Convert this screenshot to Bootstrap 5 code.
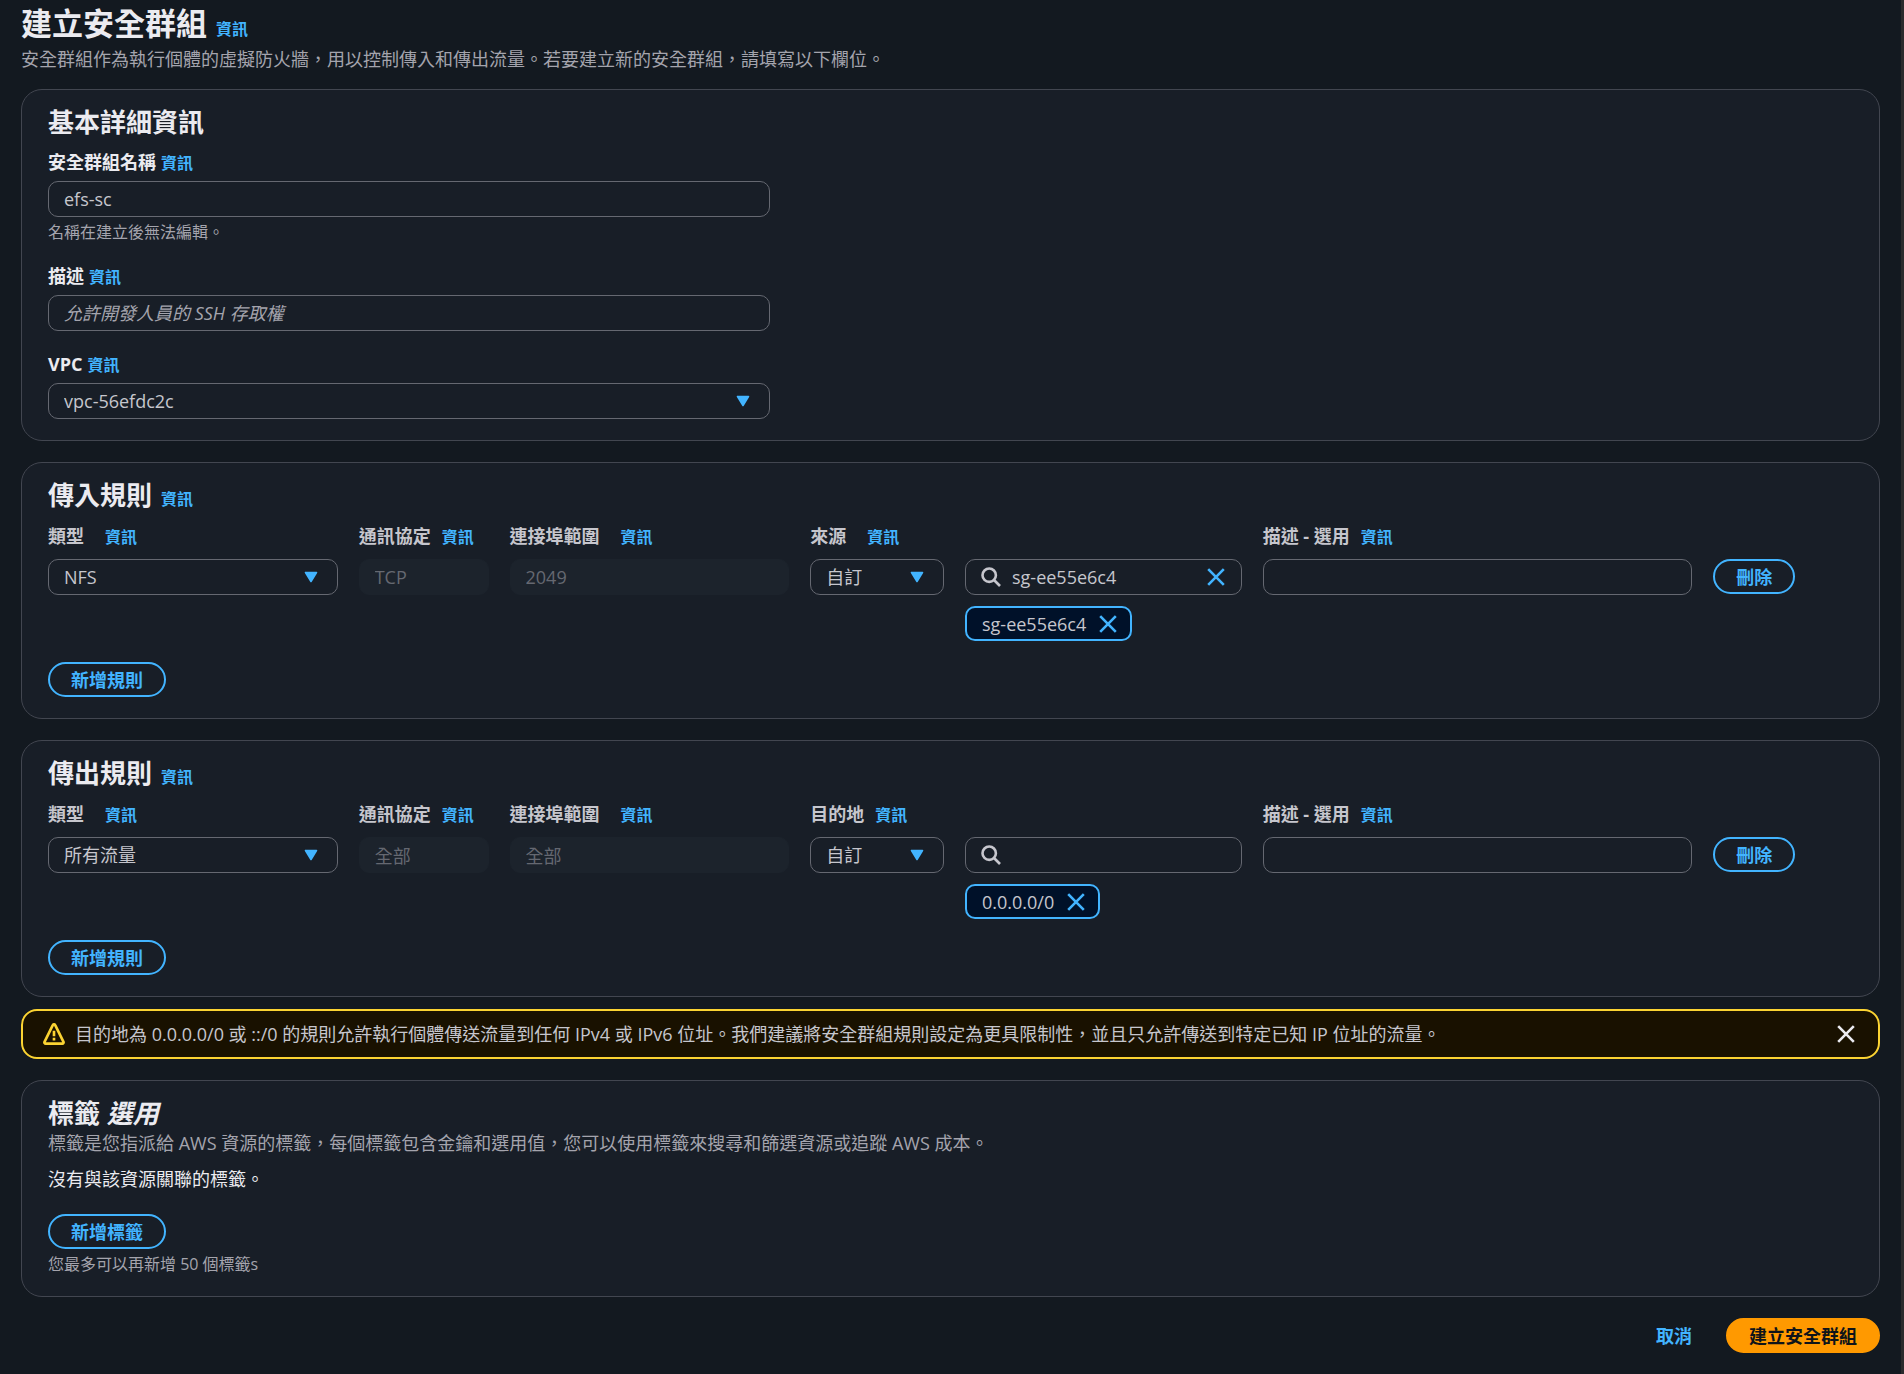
<!DOCTYPE html>
<html lang="zh-Hant" data-bs-theme="dark">
<head>
<meta charset="utf-8">
<meta name="viewport" content="width=device-width, initial-scale=1">
<title>建立安全群組</title>
<link href="https://cdn.jsdelivr.net/npm/bootstrap@5.3.0/dist/css/bootstrap.min.css" rel="stylesheet">
<style>
  :root {
    --page: #131920;
    --panel: #181e27;
    --panel-line: #424650;
    --field-line: #656871;
    --accent: #42b4ff;
    --txt: #c6c6cd;
    --txt-strong: #ebebf0;
    --txt-muted: #a4a4ad;
    --gap: 21px;
  }
  body {
    min-height: 100vh;
    background: var(--page);
    color: var(--txt);
    border-right: 3px solid #2a2a2c;
    font-family: "Open Sans", "Noto Sans CJK TC", sans-serif;
    font-size: 18px;
    line-height: 24px;
  }
  .page { padding: 3px 21px 21px; }
  h1, h2 { color: var(--txt-strong); font-weight: 700; margin: 0; }
  h1 { font-size: 31px; line-height: 40px; }
  h2 { font-size: 26px; line-height: 34px; }
  .intro { color: var(--txt-muted); line-height: 26px; margin: 0; }
  .page-head { padding-bottom: 17px; }
  .page-head .intro { margin-top: 3px; }

  .panel {
    background: var(--panel);
    border: 1px solid var(--panel-line);
    border-radius: 21px;
    padding: 15px 26px 21px;
  }
  .panel + .panel, .notice + .panel { margin-top: var(--gap); }

  .info { color: var(--accent); font-size: 16px; line-height: 16px; font-weight: 700; text-decoration: none; }
  .info:hover { color: #75cfff; }
  .info-s { margin-left: 5px; }
  .info-m { margin-left: 11px; }
  .info-l { margin-left: 21px; }
  h1 .info, h2 .info { margin-left: 9px; }
  label { font-weight: 700; }
  .fields { width: 40%; padding-top: 11px; gap: var(--gap); }
  .fields label { color: var(--txt-strong); }
  .fields .form-control, .fields .form-select { margin-top: 7px; }
  .hint { color: var(--txt-muted); font-size: 16px; line-height: 22px; margin: 4px 0 0; }

  .form-control, .form-select, .search-box {
    height: 36px;
    padding: 0 15px;
    font-size: 18px;
    line-height: 24px;
    color: var(--txt);
    background-color: var(--panel);
    border: 1px solid var(--field-line);
    border-radius: 10px;
  }
  .form-select {
    padding-right: 40px;
    background-image: url("data:image/svg+xml,%3Csvg xmlns='http://www.w3.org/2000/svg' viewBox='0 0 14 12'%3E%3Cpath d='M1.5 1.5h11L7 10.5z' fill='%2342b4ff' stroke='%2342b4ff' stroke-width='1.6' stroke-linejoin='round'/%3E%3C/svg%3E");
    background-size: 14px 12px;
    background-position: right 19px center;
  }
  .form-control:focus, .form-select:focus { background-color: var(--panel); color: var(--txt); border-color: var(--accent); box-shadow: none; }
  .form-control::placeholder { color: var(--txt-muted); font-style: italic; opacity: 1; }
  .form-control:disabled { background: #1c232c; border-color: #1c232c; color: #656871; }

  .rules {
    display: grid;
    grid-template-columns: 290fr 130fr 280fr 134fr 277fr 430fr 140fr;
    column-gap: var(--gap);
    row-gap: 11px;
    align-items: start;
    padding: 12px 0 21px;
  }
  .rules > * { min-width: 0; }
  .head { white-space: nowrap; }
  .head-wide { grid-column: span 2; }
  .head-last { grid-column: span 2; }
  .search-box svg { flex: none; }
  .search-box input { flex: 1; min-width: 0; border: 0; outline: 0; background: none; color: inherit; padding: 0; margin: 0 11px; }
  .icon-btn { border: 0; background: none; padding: 0; display: flex; color: var(--accent); }
  .token {
    height: 35px;
    margin-top: 11px;
    padding: 0 12px 0 15px;
    gap: 12px;
    background: #001129;
    border: 2px solid var(--accent);
    border-radius: 10px;
    vertical-align: top;
  }

  .pill {
    height: 35px;
    padding: 0 21px;
    border: 2px solid var(--accent);
    border-radius: 21px;
    font-size: 18px;
    line-height: 24px;
    font-weight: 700;
    color: var(--accent);
    vertical-align: top;
  }
  .pill:hover { color: #75cfff; border-color: #75cfff; }
  .pill-main, .pill-main:hover { background: #ff9900; border-color: #ff9900; color: #0f141a; }
  .pill-link, .pill-link:hover { border-color: transparent; }

  .notice {
    margin-top: 12px;
    padding: 11px 22px 11px 20px;
    gap: 10px;
    background: #191100;
    border: 2px solid #fbd332;
    border-radius: 16px;
  }
  .notice .icon-btn { color: var(--txt-strong); }
  .none-yet { color: var(--txt-strong); margin: 11px 0 23px; }
  .actions { margin-top: var(--gap); gap: 11px; }
</style>
<script src="https://cdn.jsdelivr.net/npm/bootstrap@5.3.0/dist/js/bootstrap.bundle.min.js" defer></script>
</head>
<body>
<svg class="d-none" aria-hidden="true">
  <symbol id="x" viewBox="0 0 20 20"><path d="M2.2 2.2 17.8 17.8M17.8 2.2 2.2 17.8" fill="none" stroke="currentColor" stroke-width="2.6"/></symbol>
  <symbol id="find" viewBox="0 0 20 20"><circle cx="8.2" cy="8.2" r="6.7" fill="none" stroke="currentColor" stroke-width="2.6"/><path d="m13 13 6 6" fill="none" stroke="currentColor" stroke-width="2.6"/></symbol>
  <symbol id="warn" viewBox="0 0 20 20"><path d="M8.9 1.9a1.2 1.2 0 0 1 2.2 0l7.5 15.2a1.1 1.1 0 0 1-1 1.6H2.4a1.1 1.1 0 0 1-1-1.6z" fill="none" stroke="#fbd332" stroke-width="2.4" stroke-linejoin="round"/><path d="M10 7v5M10 13.4v2.6" stroke="#fbd332" stroke-width="2.4"/></symbol>
</svg>

<main class="page">
  <header class="page-head">
    <h1>建立安全群組<a href="#" class="info">資訊</a></h1>
    <p class="intro">安全群組作為執行個體的虛擬防火牆，用以控制傳入和傳出流量。若要建立新的安全群組，請填寫以下欄位。</p>
  </header>

  <section class="panel">
    <h2>基本詳細資訊</h2>
    <div class="fields d-flex flex-column">
      <div>
        <div><label for="sg-name">安全群組名稱</label><a href="#" class="info info-s">資訊</a></div>
        <input id="sg-name" type="text" class="form-control" value="efs-sc">
        <p class="hint">名稱在建立後無法編輯。</p>
      </div>
      <div>
        <div><label for="sg-desc">描述</label><a href="#" class="info info-s">資訊</a></div>
        <input id="sg-desc" type="text" class="form-control" placeholder="允許開發人員的 SSH 存取權">
      </div>
      <div>
        <div><label for="sg-vpc">VPC</label><a href="#" class="info info-s">資訊</a></div>
        <select id="sg-vpc" class="form-select"><option>vpc-56efdc2c</option></select>
      </div>
    </div>
  </section>

  <section class="panel">
    <h2>傳入規則<a href="#" class="info">資訊</a></h2>
    <div class="rules">
      <div class="head"><label for="in-type">類型</label><a href="#" class="info info-l">資訊</a></div>
      <div class="head"><label for="in-proto">通訊協定</label><a href="#" class="info info-m">資訊</a></div>
      <div class="head"><label for="in-port">連接埠範圍</label><a href="#" class="info info-l">資訊</a></div>
      <div class="head head-wide"><label for="in-source">來源</label><a href="#" class="info info-l">資訊</a></div>
      <div class="head head-last"><label for="in-desc">描述 - 選用</label><a href="#" class="info info-m">資訊</a></div>

      <select id="in-type" class="form-select"><option>NFS</option></select>
      <input id="in-proto" type="text" class="form-control" value="TCP" disabled>
      <input id="in-port" type="text" class="form-control" value="2049" disabled>
      <select id="in-source" class="form-select"><option>自訂</option></select>
      <div>
        <div class="search-box d-flex align-items-center">
          <svg width="20" height="20" aria-hidden="true"><use href="#find"/></svg>
          <input type="text" value="sg-ee55e6c4" aria-label="搜尋來源">
          <button type="button" class="icon-btn" aria-label="清除"><svg width="20" height="20"><use href="#x"/></svg></button>
        </div>
        <div class="token d-inline-flex align-items-center">
          <span>sg-ee55e6c4</span>
          <button type="button" class="icon-btn" aria-label="移除"><svg width="20" height="20"><use href="#x"/></svg></button>
        </div>
      </div>
      <input id="in-desc" type="text" class="form-control">
      <div><button type="button" class="btn pill">刪除</button></div>
    </div>
    <button type="button" class="btn pill d-block">新增規則</button>
  </section>

  <section class="panel">
    <h2>傳出規則<a href="#" class="info">資訊</a></h2>
    <div class="rules">
      <div class="head"><label for="out-type">類型</label><a href="#" class="info info-l">資訊</a></div>
      <div class="head"><label for="out-proto">通訊協定</label><a href="#" class="info info-m">資訊</a></div>
      <div class="head"><label for="out-port">連接埠範圍</label><a href="#" class="info info-l">資訊</a></div>
      <div class="head head-wide"><label for="out-dest">目的地</label><a href="#" class="info info-m">資訊</a></div>
      <div class="head head-last"><label for="out-desc">描述 - 選用</label><a href="#" class="info info-m">資訊</a></div>

      <select id="out-type" class="form-select"><option>所有流量</option></select>
      <input id="out-proto" type="text" class="form-control" value="全部" disabled>
      <input id="out-port" type="text" class="form-control" value="全部" disabled>
      <select id="out-dest" class="form-select"><option>自訂</option></select>
      <div>
        <div class="search-box d-flex align-items-center">
          <svg width="20" height="20" aria-hidden="true"><use href="#find"/></svg>
          <input type="text" aria-label="搜尋目的地">
        </div>
        <div class="token d-inline-flex align-items-center">
          <span>0.0.0.0/0</span>
          <button type="button" class="icon-btn" aria-label="移除"><svg width="20" height="20"><use href="#x"/></svg></button>
        </div>
      </div>
      <input id="out-desc" type="text" class="form-control">
      <div><button type="button" class="btn pill">刪除</button></div>
    </div>
    <button type="button" class="btn pill d-block">新增規則</button>
  </section>

  <div class="notice d-flex align-items-center" role="alert">
    <svg class="flex-shrink-0" width="22" height="22" aria-hidden="true"><use href="#warn"/></svg>
    <div class="flex-grow-1">目的地為 0.0.0.0/0 或 ::/0 的規則允許執行個體傳送流量到任何 IPv4 或 IPv6 位址。我們建議將安全群組規則設定為更具限制性，並且只允許傳送到特定已知 IP 位址的流量。</div>
    <button type="button" class="icon-btn" aria-label="關閉"><svg width="20" height="20"><use href="#x"/></svg></button>
  </div>

  <section class="panel">
    <h2>標籤 <em>選用</em></h2>
    <p class="intro">標籤是您指派給 AWS 資源的標籤，每個標籤包含金鑰和選用值，您可以使用標籤來搜尋和篩選資源或追蹤 AWS 成本。</p>
    <p class="none-yet">沒有與該資源關聯的標籤。</p>
    <button type="button" class="btn pill d-block">新增標籤</button>
    <p class="hint">您最多可以再新增 50 個標籤s</p>
  </section>

  <footer class="actions d-flex justify-content-end">
    <button type="button" class="btn pill pill-link">取消</button>
    <button type="submit" class="btn pill pill-main">建立安全群組</button>
  </footer>
</main>
</body>
</html>
